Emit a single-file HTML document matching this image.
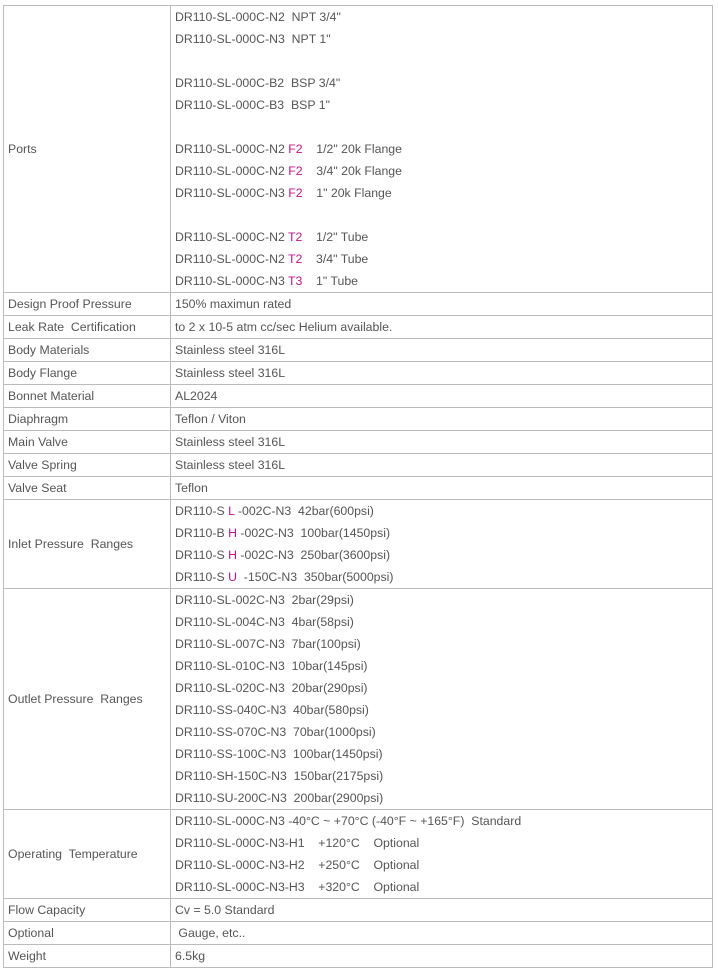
<!DOCTYPE html>
<html><head><meta charset="utf-8"><style>
body{margin:0;background:#fff;}
table{position:absolute;left:3px;top:5px;width:710px;border-collapse:collapse;font-family:"Liberation Sans","Noto Sans CJK KR",sans-serif;font-size:12.3px;color:#555;}
td{border:1px solid #bbb;padding:0 0 0 4px;line-height:22px;height:22px;vertical-align:middle;white-space:pre;}
td.l{width:162px;}
.m{color:#c0148c;}
</style></head><body>
<table>
<tr><td class="l">Ports</td><td>DR110-SL-000C-N2  NPT 3/4"
DR110-SL-000C-N3  NPT 1"

DR110-SL-000C-B2  BSP 3/4"
DR110-SL-000C-B3  BSP 1"

DR110-SL-000C-N2 <span class="m">F2</span>    1/2" 20k Flange
DR110-SL-000C-N2 <span class="m">F2</span>    3/4" 20k Flange
DR110-SL-000C-N3 <span class="m">F2</span>    1" 20k Flange

DR110-SL-000C-N2 <span class="m">T2</span>    1/2" Tube
DR110-SL-000C-N2 <span class="m">T2</span>    3/4" Tube
DR110-SL-000C-N3 <span class="m">T3</span>    1" Tube</td></tr>
<tr><td class="l">Design Proof Pressure</td><td>150% maximun rated</td></tr>
<tr><td class="l">Leak Rate  Certification</td><td>to 2 x 10-5 atm cc/sec Helium available.</td></tr>
<tr><td class="l">Body Materials</td><td>Stainless steel 316L</td></tr>
<tr><td class="l">Body Flange</td><td>Stainless steel 316L</td></tr>
<tr><td class="l">Bonnet Material</td><td>AL2024</td></tr>
<tr><td class="l">Diaphragm</td><td>Teflon / Viton</td></tr>
<tr><td class="l">Main Valve</td><td>Stainless steel 316L</td></tr>
<tr><td class="l">Valve Spring</td><td>Stainless steel 316L</td></tr>
<tr><td class="l">Valve Seat</td><td>Teflon</td></tr>
<tr><td class="l">Inlet Pressure  Ranges</td><td>DR110-S <span class="m">L</span> -002C-N3  42bar(600psi)
DR110-B <span class="m">H</span> -002C-N3  100bar(1450psi)
DR110-S <span class="m">H</span> -002C-N3  250bar(3600psi)
DR110-S <span class="m">U</span>  -150C-N3  350bar(5000psi)</td></tr>
<tr><td class="l">Outlet Pressure  Ranges</td><td>DR110-SL-002C-N3  2bar(29psi)
DR110-SL-004C-N3  4bar(58psi)
DR110-SL-007C-N3  7bar(100psi)
DR110-SL-010C-N3  10bar(145psi)
DR110-SL-020C-N3  20bar(290psi)
DR110-SS-040C-N3  40bar(580psi)
DR110-SS-070C-N3  70bar(1000psi)
DR110-SS-100C-N3  100bar(1450psi)
DR110-SH-150C-N3  150bar(2175psi)
DR110-SU-200C-N3  200bar(2900psi)</td></tr>
<tr><td class="l">Operating  Temperature</td><td>DR110-SL-000C-N3 -40°C ~ +70°C (-40°F ~ +165°F)  Standard
DR110-SL-000C-N3-H1    +120°C    Optional
DR110-SL-000C-N3-H2    +250°C    Optional
DR110-SL-000C-N3-H3    +320°C    Optional</td></tr>
<tr><td class="l">Flow Capacity</td><td>Cv = 5.0 Standard</td></tr>
<tr><td class="l">Optional</td><td> Gauge, etc..</td></tr>
<tr><td class="l">Weight</td><td>6.5kg</td></tr>
</table>
</body></html>
